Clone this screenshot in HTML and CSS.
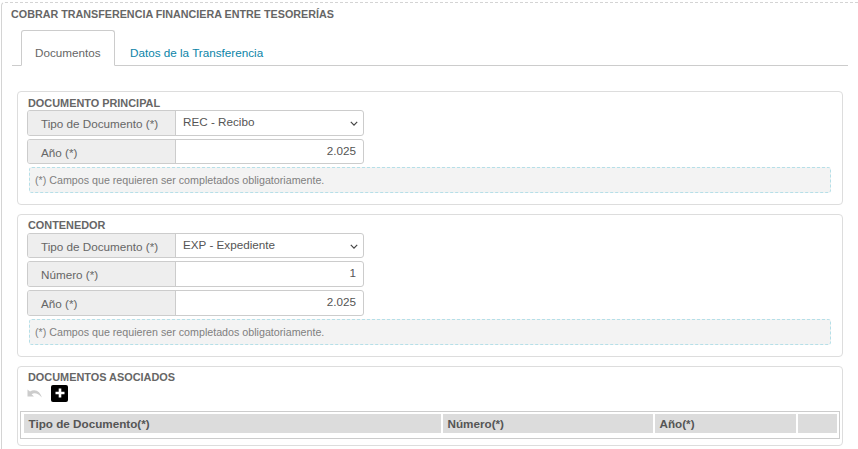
FILE: index.html
```html
<!DOCTYPE html>
<html lang="es">
<head>
<meta charset="utf-8">
<title>Cobrar transferencia</title>
<link rel="stylesheet" href="styles.css">
</head>
<body>
<main class="page">
  <h1 class="title">COBRAR TRANSFERENCIA FINANCIERA ENTRE TESORERÍAS</h1>
  <nav class="tabs">
    <a class="tab active">Documentos</a>
    <a class="tab">Datos de la Transferencia</a>
  </nav>
  <section class="card first">
    <h2 class="card-title">DOCUMENTO PRINCIPAL</h2>
    <div class="field"><span class="label">Tipo de Documento (*)</span><span class="value select">REC - Recibo<svg class="chev" viewBox="0 0 10 6"><path d="M1 1l4 4 4-4" fill="none" stroke="#444" stroke-width="1.5"/></svg></span></div>
    <div class="field"><span class="label">Año (*)</span><span class="value num">2.025</span></div>
    <p class="note">(*) Campos que requieren ser completados obligatoriamente.</p>
  </section>
  <section class="card second">
    <h2 class="card-title">CONTENEDOR</h2>
    <div class="field"><span class="label">Tipo de Documento (*)</span><span class="value select">EXP - Expediente<svg class="chev" viewBox="0 0 10 6"><path d="M1 1l4 4 4-4" fill="none" stroke="#444" stroke-width="1.5"/></svg></span></div>
    <div class="field"><span class="label">Número (*)</span><span class="value num">1</span></div>
    <div class="field"><span class="label">Año (*)</span><span class="value num">2.025</span></div>
    <p class="note">(*) Campos que requieren ser completados obligatoriamente.</p>
  </section>
  <section class="card last">
    <h2 class="card-title">DOCUMENTOS ASOCIADOS</h2>
    <div class="tools">
      <svg class="undo" viewBox="0 0 16 9"><path d="M0.5 0.5v7h6.5L4.6 5.2C7.6 3.4 11 4.4 14.8 8.6 13.6 3.2 8.4 -0.8 3 2.6z" fill="#ccc"/></svg>
      <span class="add"><svg viewBox="0 0 10 10"><path d="M5 .5v9M.5 5h9" stroke="#fff" stroke-width="2.6"/></svg></span>
    </div>
    <div class="table-wrap">
      <div class="thead">
        <span class="th c1">Tipo de Documento(*)</span>
        <span class="th c2">Número(*)</span>
        <span class="th c3">Año(*)</span>
        <span class="th c4"></span>
      </div>
    </div>
  </section>
</main>
</body>
</html>
```
FILE: styles.css
```css
* { box-sizing: border-box; }
html, body { margin: 0; height: 449px; overflow: hidden; background: #fff; }
body { font-family: "Liberation Sans", Arial, sans-serif; color: #666; }
.page {
  width: 857px;
  height: 449px;
  margin-left: 1px;
  margin-top: 2px;
  border-left: 1px solid #d4d4d4;
  border-top: 1px dashed #d4d4d4;
  border-top-left-radius: 4px;
  padding: 5px 0 0 9px;
}
.title { margin: 0; font-size: 10.75px; line-height: 12px; font-weight: 700; color: #666; }
.tabs {
  display: flex;
  height: 36px;
  margin: 10px 0 0 1px;
  padding-left: 9px;
  width: 836px;
  border-bottom: 1px solid #ccc;
}
.tab { font-size: 11.7px; line-height: 16px; height: 36px; padding: 15px 14px 0 15px; color: #0a84a8; }
.tab.active {
  width: 94px;
  color: #666;
  background: #fff;
  border: 1px solid #ccc;
  border-bottom-color: #fff;
  border-radius: 3px 3px 0 0;
  padding: 14px 0 0 13px;
}
.card {
  width: 826px;
  margin: 9px 0 0 6px;
  border: 1px solid #ddd;
  border-radius: 4px;
  padding: 4px 10px 0;
}
.first { margin-top: 25px; height: 114px; padding-top: 4.5px; }
.first .field { margin-bottom: 3px; }
.first .note { margin-top: -0.4px; }
.second { height: 142.5px; }
.last { height: 80px; margin-top: 9.5px; }
.card-title { margin: 0 0 1.5px; font-size: 10.9px; line-height: 12px; font-weight: 700; color: #666; }
.field {
  display: flex;
  width: 337px;
  height: 25.6px;
  margin: 0 0 3.2px -1px;
  border: 1px solid #ccc;
  border-radius: 3px;
  overflow: hidden;
  font-size: 11.7px;
}
.label { width: 148px; padding: 6px 0 0 13px; background: #eee; border-right: 1px solid #ccc; color: #666; }
.value { flex: 1; position: relative; padding: 4px 7px; color: #555; }
.num { text-align: right; }
.chev { position: absolute; right: 5px; top: 10px; width: 8px; height: 5px; }
.note {
  width: 802px;
  height: 26.5px;
  margin: 0 0 0 1px;
  padding: 5px 5px 0;
  font-size: 10.7px;
  line-height: 14px;
  color: #808080;
  background: #f3f3f3;
  border: 1px dashed #b5dfe8;
  border-radius: 3px;
}
.tools { display: flex; align-items: center; gap: 8px; height: 17px; margin-top: 0.5px; }
.undo { width: 16px; height: 9px; margin-left: -1px; }
.add { width: 17px; height: 17px; background: #000; border-radius: 2px; display: flex; align-items: center; justify-content: center; }
.add svg { width: 10px; height: 10px; }
.table-wrap { width: 820px; height: 28px; margin: 9px 0 0 -8px; border: 1px solid #ccc; padding: 2px 2px 0 3px; }
.thead { display: flex; gap: 2px; height: 19px; }
.th { background: #dcdcdc; font-size: 11.7px; font-weight: 700; line-height: 19px; padding-left: 4.5px; color: #555; }
.c1 { width: 417px; }
.c2 { width: 210px; }
.c3 { width: 141px; }
.c4 { flex: 1; }
```
